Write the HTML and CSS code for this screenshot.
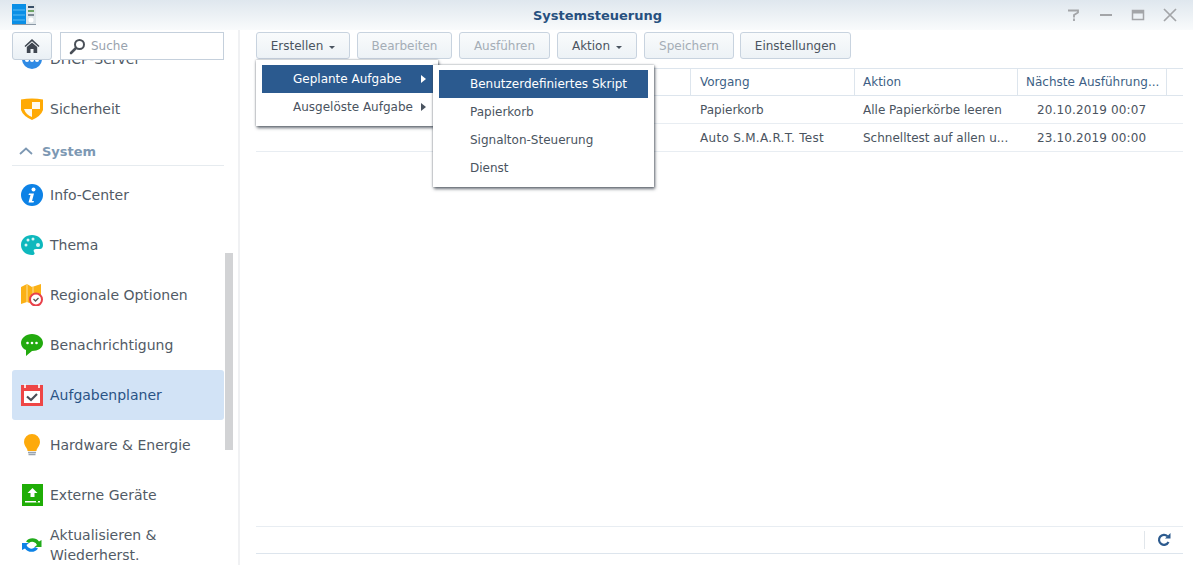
FILE: index.html
```html
<!DOCTYPE html>
<html lang="de">
<head>
<meta charset="utf-8">
<title>Systemsteuerung</title>
<link rel="stylesheet" href="styles.css">
</head>
<body>
<div class="window">
  <header class="titlebar">
    <svg class="logo" width="24" height="21" viewBox="0 0 24 21"><rect x="0" y="0" width="14" height="20" fill="#0a8fe6"/><rect x="14" y="0" width="10" height="20" fill="#dfe6ea"/><path d="M1 6h12M1 11h12M1 16h12" stroke="#5dbcf5" stroke-width="1"/><path d="M16 3h6" stroke="#3a5068" stroke-width="2"/><path d="M16 7h6" stroke="#4a8f3a" stroke-width="1.5"/><path d="M16 11h6" stroke="#5a6a78" stroke-width="1.5"/><circle cx="19" cy="16" r="2.5" fill="#fff"/><rect x="0" y="20" width="24" height="1" fill="#8a98a5"/></svg>
    <h1 class="title">Systemsteuerung</h1>
    <div class="winctl">
      <svg width="14" height="14" viewBox="0 0 14 14"><path d="M1 2.500h10v2L7 7v2.500M7 10.500v2.500" fill="none" stroke="#a3a5a8" stroke-width="1.800"/></svg>
      <svg width="14" height="14" viewBox="0 0 14 14"><rect x="1" y="6" width="12" height="2" fill="#a3a5a8"/></svg>
      <svg width="14" height="14" viewBox="0 0 14 14"><path d="M1.500 2.500h11v9h-11z" fill="none" stroke="#a3a5a8" stroke-width="1.500"/><rect x="1" y="2" width="12" height="3.500" fill="#a3a5a8"/></svg>
      <svg width="14" height="14" viewBox="0 0 14 14"><path d="M1 1l12 12M13 1L1 13" stroke="#a3a5a8" stroke-width="1.700"/></svg>
    </div>
  </header>
  <div class="body">
    <aside class="sidebar">
      <div class="searchrow">
        <button class="homebtn"><svg width="16" height="16" viewBox="0 0 16 16"><path d="M8 1L0.500 8l1 1L8 3.200 14.500 9l1-1z" fill="#3f4650"/><path d="M2.800 9L8 4.500 13.200 9v6H9.500v-4h-3v4H2.800z" fill="#3f4650"/></svg></button>
        <div class="search"><svg width="17" height="17" viewBox="0 0 17 17"><circle cx="10.500" cy="6.500" r="4.500" fill="none" stroke="#4a5058" stroke-width="2"/><path d="M7 10l-5 5" stroke="#4a5058" stroke-width="2.600" stroke-linecap="round"/></svg><span>Suche</span></div>
      </div>
      <nav class="navclip">
        <div class="navlist">
          <a class="item"><svg class="ico" width="22" height="22" viewBox="0 0 22 22"><circle cx="11" cy="11" r="10" fill="#2f8ae4"/><circle cx="6" cy="12" r="2" fill="#fff"/><circle cx="11" cy="12" r="2" fill="#fff"/><circle cx="16" cy="12" r="2" fill="#fff"/></svg><span>DHCP-Server</span></a>
          <a class="item"><svg class="ico" width="22" height="22" viewBox="0 0 22 22"><path d="M0 1.500Q11 -0.500 22 1.500V12Q20 18 11 22Q2 18 0 12z" fill="#ffaa05"/><path d="M11 4L19 4V11H11zM3 11H11V19Q5 17 3 11z" fill="#fffaf0"/></svg><span>Sicherheit</span></a>
          <div class="section"><svg width="14" height="8" viewBox="0 0 14 8"><path d="M1 7l6-5.500L13 7" fill="none" stroke="#7d98b3" stroke-width="1.800"/></svg><span>System</span></div>
          <a class="item"><svg class="ico" width="22" height="22" viewBox="0 0 22 22"><circle cx="11" cy="11" r="11" fill="#0d82e6"/><circle cx="12.500" cy="5.500" r="2" fill="#fff"/><path d="M8 9.500h5l-2 7.500h2l-.5 1.500H7.500l2-7.500H7.500z" fill="#fff"/></svg><span>Info-Center</span></a>
          <a class="item"><svg class="ico" width="22" height="22" viewBox="0 0 22 22"><path d="M11 1C5 1 0 5 0 11c0 6 5 10 11 10 3 0 3-2 2-3-1-2 0-3 2-3h4c2 0 3-2 3-4C22 5 17 1 11 1z" fill="#0eb8bd"/><circle cx="7" cy="6" r="1.500" fill="#d8f5f5"/><circle cx="12" cy="5" r="1.500" fill="#d8f5f5"/><circle cx="5" cy="11" r="1.500" fill="#d8f5f5"/><circle cx="17" cy="11" r="2" fill="#d8f5f5"/></svg><span>Thema</span></a>
          <a class="item"><svg class="ico" width="22" height="22" viewBox="0 0 22 22"><path d="M0 3l6-3 5 3 9-3v11H11v9l-5-2-6 2z" fill="#fbb116"/><path d="M6 0v18M12 2v8" stroke="#fde19a" stroke-width="1"/><circle cx="15" cy="15.500" r="6" fill="#fff" stroke="#e8404a" stroke-width="2"/><path d="M12.500 15l2 2 3-3" fill="none" stroke="#555" stroke-width="1.300"/></svg><span>Regionale Optionen</span></a>
          <a class="item"><svg class="ico" width="22" height="22" viewBox="0 0 22 22"><path d="M11 0C5 0 0 4 0 9c0 3 2 6 5 7v6l6-5c6 0 11-3 11-8S17 0 11 0z" fill="#22aa0e"/><circle cx="6.500" cy="9" r="1.300" fill="#fff"/><circle cx="11" cy="9" r="1.300" fill="#fff"/><circle cx="15.500" cy="9" r="1.300" fill="#fff"/></svg><span>Benachrichtigung</span></a>
          <a class="item active"><svg class="ico" width="22" height="22" viewBox="0 0 22 22"><rect x="0" y="1" width="22" height="21" fill="#ee4646"/><rect x="3" y="7" width="16" height="12" fill="#fff"/><rect x="3" y="0" width="2" height="4" fill="#fff" opacity=".8"/><rect x="17" y="0" width="2" height="4" fill="#fff" opacity=".8"/><path d="M6 12.500l4 3.500 6-6" fill="none" stroke="#4a4f58" stroke-width="2.200"/></svg><span>Aufgabenplaner</span></a>
          <a class="item"><svg class="ico" width="22" height="22" viewBox="0 0 22 22"><path d="M11 0a8 8 0 0 0-8 8c0 3 2 5 3 7 .4.800.5 1 .5 2h9c0-1 .1-1.200.5-2 1-2 3-4 3-7a8 8 0 0 0-8-8z" fill="#fdaa0c"/><path d="M7 18.500h8M7.500 20.500h7" stroke="#9aa4ae" stroke-width="1.300"/></svg><span>Hardware &amp; Energie</span></a>
          <a class="item"><svg class="ico" width="22" height="22" viewBox="0 0 22 22"><rect x="1" y="0" width="21" height="22" fill="#1fad06"/><path d="M11.500 4l5 5h-3v4h-4V9h-3z" fill="#fff"/><rect x="4" y="17" width="15" height="1.500" fill="#fff"/><rect x="15" y="17" width="2" height="1.500" fill="#1fad06"/></svg><span>Externe Geräte</span></a>
          <a class="item"><svg class="ico" width="22" height="22" viewBox="0 0 22 22"><path d="M5 7.500A8 8 0 0 1 18 7.500l2.500-1.500V13h-7l2.500-2A5 5 0 0 0 8 9z" fill="#21ab1b"/><path d="M17 14.500A8 8 0 0 1 4 14.500L1 16V9h7l-2.500 2A5 5 0 0 0 14 13z" fill="#0d82e6"/></svg><span class="wrap">Aktualisieren &amp; Wiederherst.</span></a>
        </div>
      </nav>
      <div class="scrollthumb"></div>
    </aside>
    <main class="main">
      <div class="toolbar">
        <button class="btn w-er">Erstellen<i class="caret"></i></button>
        <button class="btn off w-be">Bearbeiten</button>
        <button class="btn off w-au">Ausführen</button>
        <button class="btn w-ak">Aktion<i class="caret"></i></button>
        <button class="btn off w-sp">Speichern</button>
        <button class="btn w-ei">Einstellungen</button>
      </div>
      <div class="table">
        <div class="row head"><div class="c c0"></div><div class="c c1">Vorgang</div><div class="c c2">Aktion</div><div class="c c3">Nächste Ausführung...</div><div class="c c4"></div></div>
        <div class="row"><div class="c c0"></div><div class="c c1">Papierkorb</div><div class="c c2">Alle Papierkörbe leeren</div><div class="c c3 date">20.10.2019 00:07</div><div class="c c4"></div></div>
        <div class="row"><div class="c c0"></div><div class="c c1 wide">Auto S.M.A.R.T. Test</div><div class="c c2">Schnelltest auf allen u...</div><div class="c c3 date">23.10.2019 00:00</div><div class="c c4"></div></div>
      </div>
      <div class="footer"><span class="refresh"><svg width="14" height="14" viewBox="0 0 14 14"><path d="M11.500 9A5 5 0 1 1 10.500 3.200" fill="none" stroke="#2c5a8e" stroke-width="2.200"/><path d="M8 5.500h5.500V0z" fill="#2c5a8e"/></svg></span></div>
    </main>
  </div>
  <div class="menu m1">
    <div class="mi sel">Geplante Aufgabe<i class="arr"></i></div>
    <div class="mi">Ausgelöste Aufgabe<i class="arr dark"></i></div>
  </div>
  <div class="menu m2">
    <div class="mi sel">Benutzerdefiniertes Skript</div>
    <div class="mi">Papierkorb</div>
    <div class="mi">Signalton-Steuerung</div>
    <div class="mi">Dienst</div>
  </div>
</div>
</body>
</html>
```
FILE: styles.css
```css
* { box-sizing: border-box; }
html, body { margin: 0; height: 100%; overflow: hidden; }
body { font-family: "DejaVu Sans", sans-serif; font-size: 12px; color: #4a5460; background: #fff; }
.window { position: relative; width: 1193px; height: 565px; display: flex; flex-direction: column; overflow: hidden; }
.titlebar { height: 30px; flex: none; display: grid; grid-template-columns: 1fr auto 1fr; align-items: center; padding: 0 12px 0 14px; background: linear-gradient(#dfe7ee, #f9fbfc); }
.logo { display: block; margin: -1px 0 0 -2px; }
.title { margin: 0; font-size: 13px; font-weight: bold; color: #27507f; }
.winctl { justify-self: end; display: flex; gap: 18px; margin-right: 4px; margin-top: 0; }
.winctl svg { display: block; }
.body { flex: 1; display: flex; min-height: 0; }
.sidebar { width: 240px; flex: none; position: relative; display: flex; flex-direction: column; padding-left: 12px; border-right: 2px solid #f0f1f3; }
.searchrow { height: 30px; flex: none; display: flex; gap: 8px; padding-top: 2px; }
.homebtn { width: 40px; height: 28px; padding: 0; display: flex; align-items: center; justify-content: center; border: 1px solid #c5d0dc; border-radius: 3px; background: linear-gradient(#fafcfd, #eaf0f5); }
.search { width: 164px; height: 28px; display: flex; align-items: center; gap: 5px; padding-left: 8px; border: 1px solid #c5d0dc; background: #fff; color: #98a2ad; }
.navclip { flex: 1; overflow: hidden; width: 212px; }
.navlist { margin-top: -26px; }
.item { height: 50px; display: flex; align-items: center; gap: 7px; padding-left: 9px; font-size: 14px; color: #525b66; border-radius: 3px; }
.item .wrap { line-height: 20px; width: 150px; }
.item .ico { flex: none; }
.item.active { background: #d2e3f6; color: #2a5385; }
.section { height: 32px; display: flex; align-items: center; gap: 9px; padding: 3px 0 0 7px; margin-bottom: 4px; border-bottom: 1px solid #e6ebef; font-size: 13px; font-weight: bold; color: #7d98b3; }
.scrollthumb { position: absolute; left: 225px; top: 223px; width: 8px; height: 197px; background: #d2d3d5; }
.main { flex: 1; display: flex; flex-direction: column; padding: 2px 10px 0 16px; min-width: 0; }
.toolbar { display: flex; gap: 7px; height: 36px; flex: none; }
.btn { height: 27px; padding: 1px 0 0; display: flex; align-items: center; justify-content: center; border: 1px solid #c8d3df; border-radius: 3px; background: linear-gradient(#f9fbfc, #edf2f6); font: inherit; color: #4a5460; }
.btn.off { color: #a4adb6; }
.w-er { width: 94px; } .w-be { width: 95px; } .w-au { width: 91px; } .w-ak { width: 80px; } .w-sp { width: 90px; } .w-ei { width: 111px; margin-left: -1px; }
.caret { width: 0; height: 0; margin-left: 6px; margin-top: 2px; border: 3px solid transparent; border-top-color: #4a5460; border-bottom: 0; }
.table { flex: 1; border-top: 1px solid #dde5ed; }
.row { display: flex; height: 28px; border-bottom: 1px solid #e8edf2; }
.row.head { height: 27px; border-bottom-color: #dde5ed; color: #3d5f85; }
.c { display: flex; align-items: center; padding-left: 8px; white-space: nowrap; overflow: hidden; }
.head .c { border-right: 1px solid #dde5ed; }
.c0 { width: 435px; } .c1 { width: 164px; padding-left: 9px; } .c2 { width: 163px; } .c3 { width: 149px; } .c4 { flex: 1; }
.head .c4 { border-right: 0; }
.date { padding-left: 19px; letter-spacing: .13px; }
.wide { letter-spacing: .3px; }
.footer { height: 28px; flex: none; margin-bottom: 11px; border-top: 1px solid #e8edf2; border-bottom: 1px solid #dde5ed; display: flex; align-items: center; justify-content: flex-end; padding-right: 12px; }
.refresh { display: flex; align-items: center; height: 18px; padding-left: 12px; border-left: 1px solid #e1e6eb; }
.refresh svg { display: block; }
.menu { position: absolute; background: #fff; padding: 5px 5px 5px 6px; box-shadow: 1px 2px 3px rgba(50,58,68,.7), 0 0 2px rgba(60,70,80,.55); }
.m1 { left: 256px; top: 60px; width: 182px; height: 66px; }
.m2 { left: 433px; top: 65px; width: 221px; height: 122px; padding-right: 6px; }
.mi { height: 28px; display: flex; align-items: center; padding-left: 31px; position: relative; color: #4a5460; }
.mi.sel { background: #2b5a8f; color: #fff; }
.arr { position: absolute; right: 7px; top: 10px; width: 0; height: 0; border: 4px solid transparent; border-left: 5px solid #fff; border-right: 0; }
.arr.dark { border-left-color: #4a5460; }
```
